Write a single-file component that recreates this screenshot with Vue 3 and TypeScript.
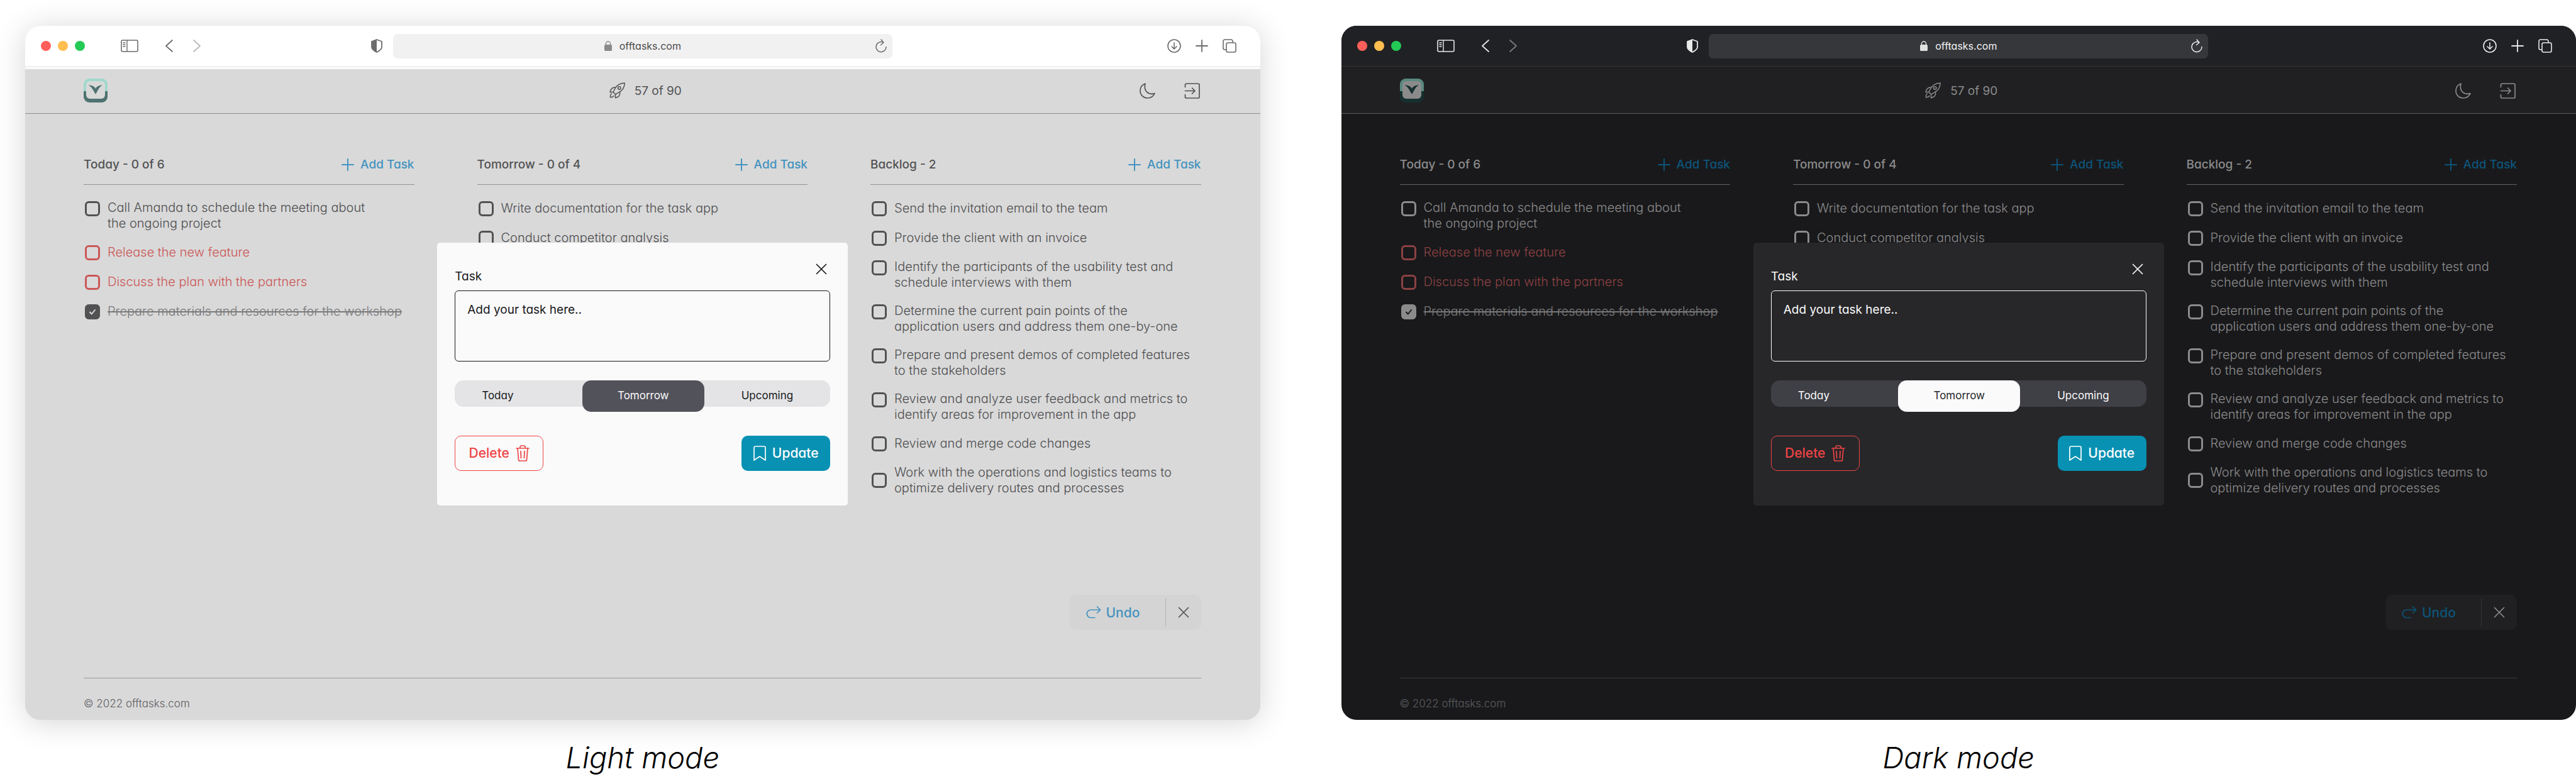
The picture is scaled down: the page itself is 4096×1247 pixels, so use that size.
<script setup lang="ts">
import { reactive } from 'vue'

interface Task {
  text: string
  urgent?: boolean
  done?: boolean
  centered?: boolean
}

interface Column {
  title: string
  tasks: Task[]
}

interface Mode {
  id: string
  caption: string
  url: string
  draft: string
  day: string
  columns: Column[]
}

const days = ['Today', 'Tomorrow', 'Upcoming']

const makeColumns = (): Column[] => [
  {
    title: 'Today - 0 of 6',
    tasks: [
      { text: 'Call Amanda to schedule the meeting about\nthe ongoing project' },
      { text: 'Release the new feature', urgent: true },
      { text: 'Discuss the plan with the partners', urgent: true },
      { text: 'Prepare materials and resources for the workshop', done: true },
    ],
  },
  {
    title: 'Tomorrow - 0 of 4',
    tasks: [
      { text: 'Write documentation for the task app' },
      { text: 'Conduct competitor analysis' },
    ],
  },
  {
    title: 'Backlog - 2',
    tasks: [
      { text: 'Send the invitation email to the team' },
      { text: 'Provide the client with an invoice' },
      { text: 'Identify the participants of the usability test and\nschedule interviews with them' },
      { text: 'Determine the current pain points of the\napplication users and address them one-by-one' },
      { text: 'Prepare and present demos of completed features\nto the stakeholders' },
      { text: 'Review and analyze user feedback and metrics to\nidentify areas for improvement in the app' },
      { text: 'Review and merge code changes' },
      { text: 'Work with the operations and logistics teams to\noptimize delivery routes and processes', centered: true },
    ],
  },
]

const makeMode = (id: string, caption: string): Mode => ({
  id,
  caption,
  url: 'offtasks.com',
  draft: '',
  day: 'Tomorrow',
  columns: makeColumns(),
})

const modes = reactive<Mode[]>([makeMode('light', 'Light mode'), makeMode('dark', 'Dark mode')])
</script>

<template>
  <main class="showcase">
    <figure v-for="mode in modes" :key="mode.id" class="mode" :class="mode.id">
      <div class="window">
        <div class="titlebar">
          <div class="bar-left">
            <div class="lights"><span class="red"></span><span class="amber"></span><span class="green"></span></div>
            <button class="icon-btn sidebar-btn" aria-label="Show sidebar">
              <svg width="28" height="20" viewBox="0 0 28 20" fill="none" stroke="currentColor" stroke-width="1.600">
                <rect x="1" y="1" width="26" height="18" rx="2" />
                <path d="M10 1v18M3.500 5h4M3.500 8h4M3.500 11h4" stroke-width="1.400" />
              </svg>
            </button>
            <button class="icon-btn back-btn" aria-label="Back">
              <svg width="12" height="20" viewBox="0 0 12 20" fill="none" stroke="currentColor" stroke-width="1.700" stroke-linecap="round" stroke-linejoin="round"><path d="M11 1 1 10l10 9" /></svg>
            </button>
            <button class="icon-btn forward" aria-label="Forward">
              <svg width="12" height="20" viewBox="0 0 12 20" fill="none" stroke="currentColor" stroke-width="1.700" stroke-linecap="round" stroke-linejoin="round"><path d="m1 1 10 9-10 9" /></svg>
            </button>
            <button class="icon-btn shield" aria-label="Privacy report">
              <svg width="18" height="22" viewBox="0 0 18 22">
                <path d="M9 1 17 4v9c0 3-3 5.500-8 8-5-2.500-8-5-8-8V4z" fill="none" stroke="currentColor" stroke-width="1.800" stroke-linejoin="round" />
                <path d="M9 1v20c-5-2.500-8-5-8-8V4z" fill="currentColor" />
              </svg>
            </button>
          </div>
          <div class="address">
            <div class="address-text">
              <svg width="12" height="16" viewBox="0 0 12 16">
                <rect x="0" y="6" width="12" height="10" rx="1.500" fill="currentColor" />
                <path d="M2.500 7V4.500a3.500 3.500 0 0 1 7 0V7" fill="none" stroke="currentColor" stroke-width="1.400" />
              </svg>
              <input v-model="mode.url" type="text" aria-label="Address" />
            </div>
            <button class="icon-btn reload" aria-label="Reload">
              <svg width="18" height="22" viewBox="0 0 18 22" fill="none" stroke="currentColor" stroke-width="1.500" stroke-linecap="round" stroke-linejoin="round">
                <path d="M17 12.500A8 8 0 1 1 13 5.700M9 1l4 4.700-4.500 3.800" />
              </svg>
            </button>
          </div>
          <div class="bar-right">
            <button class="icon-btn" aria-label="Downloads">
              <svg width="22" height="22" viewBox="0 0 22 22" fill="none" stroke="currentColor" stroke-width="1.600" stroke-linecap="round" stroke-linejoin="round"><circle cx="11" cy="11" r="10" /><path d="M11 6v10M7 12l4 4 4-4" /></svg>
            </button>
            <button class="icon-btn" aria-label="New tab">
              <svg width="20" height="20" viewBox="0 0 20 20" fill="none" stroke="currentColor" stroke-width="1.800" stroke-linecap="round"><path d="M10 1v18M1 10h18" /></svg>
            </button>
            <button class="icon-btn" aria-label="Tab overview">
              <svg width="22" height="22" viewBox="0 0 22 22" fill="none" stroke="currentColor" stroke-width="1.600"><path d="M6 17H3.500A2.500 2.500 0 0 1 1 14.500v-11A2.500 2.500 0 0 1 3.500 1h10A2.500 2.500 0 0 1 16 3.500V6" /><rect x="6" y="6" width="15" height="15" rx="2.500" /></svg>
            </button>
          </div>
        </div>

        <header class="app-header">
          <a class="logo" href="#" aria-label="Offtasks home">
            <svg width="38" height="38" viewBox="0 0 38 38">
              <path class="logo-top" d="M0 20V9a9 9 0 0 1 9-9h20a9 9 0 0 1 9 9v11z" />
              <path class="logo-bottom" d="M0 20v9a9 9 0 0 0 9 9h20a9 9 0 0 0 9-9v-9z" />
              <rect class="logo-inner" x="4" y="4" width="30" height="28" rx="6" />
              <path class="logo-mark" d="M7.500 10.500C13 10.500 17 12 19 16 21 12 25 10.500 30 10.500 25 13 23 18 19 25 15 18 12.500 13 7.500 10.500z" />
            </svg>
          </a>
          <div class="progress">
            <svg width="26" height="26" viewBox="0 0 26 26" fill="none" stroke="currentColor" stroke-width="1.500" stroke-linecap="round" stroke-linejoin="round">
              <path d="M24.200 1C16.500 1.200 11.500 4.500 8.500 10.500L6 15.500 9.500 19l4.500-2.300C20.500 13.500 24 8.500 24.200 1z" />
              <path d="M9.800 8.200C5.500 7.500 2.500 9.500 1 15.500H6" />
              <path d="M9.500 19v5.700c5.500-1 8-4.200 7-9.700" />
              <path d="M3.200 18C1.500 19.500 1.200 21.500 1.500 23.800 3.800 24 5.500 23.500 6.800 21.500" />
              <circle cx="15.700" cy="9" r="2.200" />
            </svg>
            <span>57 of 90</span>
          </div>
          <div class="header-actions">
            <button class="icon-btn" aria-label="Toggle theme">
              <svg width="25" height="25" viewBox="0 0 25 25" fill="none" stroke="currentColor" stroke-width="1.700" stroke-linejoin="round"><path d="M9 1C3.500 3 1 7.500 1 12.500 1 19 6 24 12.500 24c5.500 0 9.500-2.700 11.500-7.500C14 19.500 6 13 9 1z" /></svg>
            </button>
            <button class="icon-btn" aria-label="Log out">
              <svg width="25" height="25" viewBox="0 0 25 25" fill="none" stroke="currentColor" stroke-width="1.700" stroke-linecap="round" stroke-linejoin="round"><path d="M1.500 6.500V3a2 2 0 0 1 2-2h18.500a2 2 0 0 1 2 2v19a2 2 0 0 1-2 2H3.500a2 2 0 0 1-2-2v-3.500M1.500 12.500H17M12.500 8l4.500 4.500-4.500 4.500" /></svg>
            </button>
          </div>
        </header>

        <div class="content">
          <div class="board">
            <section v-for="column in mode.columns" :key="column.title" class="column">
              <div class="column-head">
                <h2>{{ column.title }}</h2>
                <button class="add">
                  <svg width="20" height="20" viewBox="0 0 20 20" fill="none" stroke="currentColor" stroke-width="2" stroke-linecap="round"><path d="M10 1v18M1 10h18" /></svg>
                  Add Task
                </button>
              </div>
              <ul>
                <li v-for="task in column.tasks" :key="task.text">
                  <label class="task" :class="{ urgent: task.urgent, done: task.done, centered: task.centered }">
                    <span class="check">
                      <input v-model="task.done" type="checkbox" />
                      <svg v-if="task.done" width="12" height="12" viewBox="0 0 12 12" fill="none" stroke-width="2" stroke-linecap="round" stroke-linejoin="round"><path d="m2 6.500 2.800 3L10 3" /></svg>
                    </span>
                    <span class="task-text">{{ task.text }}</span>
                  </label>
                </li>
              </ul>
            </section>
          </div>

          <div class="toast">
            <button class="undo">
              <svg width="24" height="20" viewBox="0 0 24 20" fill="none" stroke="currentColor" stroke-width="1.700" stroke-linecap="round" stroke-linejoin="round"><path d="M14 18.500H7.500a6 6 0 0 1 0-12.500H22.500M17.500 1l5 5-5 5" /></svg>
              Undo
            </button>
            <button class="dismiss" aria-label="Dismiss">
              <svg width="18" height="18" viewBox="0 0 18 18" fill="none" stroke="currentColor" stroke-width="1.700" stroke-linecap="round"><path d="m1.500 1.500 15 15M16.500 1.500l-15 15" /></svg>
            </button>
          </div>

          <footer>© 2022 offtasks.com</footer>
        </div>

        <div class="overlay">
          <form class="dialog" @submit.prevent>
            <div class="dialog-top">
              <label :for="mode.id + '-task'">Task</label>
              <button type="button" class="icon-btn close" aria-label="Close">
                <svg width="18" height="18" viewBox="0 0 18 18" fill="none" stroke="currentColor" stroke-width="1.700" stroke-linecap="round"><path d="m1.500 1.500 15 15M16.500 1.500l-15 15" /></svg>
              </button>
            </div>
            <textarea :id="mode.id + '-task'" v-model="mode.draft" placeholder="Add your task here.."></textarea>
            <div class="segments" role="radiogroup" aria-label="Day">
              <label v-for="day in days" :key="day" class="segment" :class="{ active: mode.day === day }">
                <input v-model="mode.day" type="radio" :name="mode.id + '-day'" :value="day" />
                <span>{{ day }}</span>
              </label>
            </div>
            <div class="dialog-actions">
              <button type="button" class="delete">
                Delete
                <svg width="22" height="26" viewBox="0 0 22 26" fill="none" stroke="currentColor" stroke-width="1.700" stroke-linecap="round" stroke-linejoin="round"><path d="M1 5h20M3 5l1.500 18a2 2 0 0 0 2 2h9a2 2 0 0 0 2-2L19 5M7 5V3a2 2 0 0 1 2-2h4a2 2 0 0 1 2 2v2M8 9.500l.500 11M14 9.500l-.500 11" /></svg>
              </button>
              <button type="submit" class="update">
                <svg width="20" height="24" viewBox="0 0 20 24" fill="none" stroke="currentColor" stroke-width="1.700" stroke-linecap="round" stroke-linejoin="round"><path d="M1 23V3a2 2 0 0 1 2-2h14a2 2 0 0 1 2 2v20l-9-6z" /></svg>
                Update
              </button>
            </div>
          </form>
        </div>
      </div>
      <figcaption>{{ mode.caption }}</figcaption>
    </figure>
  </main>
</template>

<style>
body {
  background: #fff;
}
</style>

<style scoped>
.showcase {
  display: flex;
  gap: 129px;
  padding: 41px 0 12px 40px;
  font-family: Inter, "Open Sans", sans-serif;
  font-feature-settings: "cv11";
  font-size: 19px;
  line-height: 25px;
}

.mode {
  flex: 1;
  min-width: 0;
  margin: 0;
}

.light {
  --bar: #fff;
  --bar-line: #e9e9e9;
  --field: #f1f1f1;
  --bar-icon: #6b6b6b;
  --bar-faint: #b9b9b9;
  --bar-lock: #8a8a8c;
  --bar-text: #4c4c4c;
  --strip: #fafafa;
  --header: #d9d9d9;
  --page: #d9d9d9;
  --header-line: #8e8e8e;
  --line: #949494;
  --foot-line: #979797;
  --foot-text: #5c5c61;
  --text: #525254;
  --body: #4e4e50;
  --muted: #79797b;
  --tick: #d9d9d9;
  --blue: #4493bf;
  --red: #cb5757;
  --toast: #d4d4d4;
  --toast-line: #b3b3b3;
  --logo-top: #9fd9cc;
  --logo-bottom: #4e7371;
  --logo-inner: #d9d9d9;
  --dialog: #fafafa;
  --dialog-text: #18181b;
  --dialog-line: #18181b;
  --track: #e4e4e6;
  --active: #52525b;
  --active-text: #fafafa;
}

.dark {
  --bar: #202124;
  --bar-line: #323235;
  --field: #36373b;
  --bar-icon: #e9e9ea;
  --bar-faint: #7d7d7f;
  --bar-lock: #e0e0e1;
  --bar-text: #f4f4f5;
  --strip: #202022;
  --header: #202022;
  --page: #19191b;
  --header-line: #5d5d5f;
  --line: #616163;
  --foot-line: #3a3a3c;
  --foot-text: #5e5e61;
  --text: #8b8b8c;
  --body: #8b8b8c;
  --muted: #78787a;
  --tick: #19191b;
  --blue: #0d5479;
  --red: #8c4143;
  --toast: #202022;
  --toast-line: #343437;
  --logo-top: #59897f;
  --logo-bottom: #16302f;
  --logo-inner: #8b8b8b;
  --dialog: #27272a;
  --dialog-text: #fafafa;
  --dialog-line: #fafafa;
  --track: #3f3f46;
  --active: #fafafa;
  --active-text: #27272a;
}

.window {
  position: relative;
  overflow: hidden;
  border-radius: 24px;
  background: var(--page);
}

.light .window {
  box-shadow: 0 4px 48px rgba(0, 0, 0, 0.17);
}

button {
  display: inline-flex;
  align-items: center;
  padding: 0;
  border: 0;
  background: none;
  color: inherit;
  font: inherit;
}

input,
textarea {
  margin: 0;
  color: inherit;
  font: inherit;
}

svg {
  display: block;
  flex: none;
}

/* Browser bar */
.titlebar {
  display: grid;
  grid-template-columns: 1fr minmax(0, 794px) 1fr;
  align-items: center;
  height: 64px;
  border-bottom: 1px solid var(--bar-line);
  background: var(--bar);
  color: var(--bar-icon);
}

.bar-left,
.bar-right {
  display: flex;
  align-items: center;
}

.bar-left {
  padding: 0 17px 0 25px;
}

.bar-right {
  justify-content: flex-end;
  gap: 23px;
  padding-right: 38px;
}

.lights {
  display: flex;
  gap: 11px;
}

.lights span {
  width: 16px;
  height: 16px;
  border-radius: 50%;
}

.red {
  background: #ff5f5a;
}

.amber {
  background: #ffbe4f;
}

.green {
  background: #23ca55;
}

.sidebar-btn {
  margin-left: 57px;
}

.back-btn {
  margin-left: 43px;
}

.forward {
  margin-left: 32px;
  color: var(--bar-faint);
}

.shield {
  margin-left: auto;
}

.address {
  display: flex;
  align-items: center;
  height: 39px;
  padding: 0 9px;
  border-radius: 7px;
  background: var(--field);
}

.address-text {
  display: flex;
  flex: 1;
  align-items: center;
  justify-content: center;
  gap: 12px;
  padding-left: 24px;
  color: var(--bar-lock);
}

.address-text input {
  width: 104px;
  padding: 0;
  border: 0;
  background: none;
  color: var(--bar-text);
  font-size: 16px;
}

/* App header */
.app-header {
  display: grid;
  grid-template-columns: 1fr auto 1fr;
  align-items: center;
  box-sizing: border-box;
  height: 75px;
  padding: 2px 96px 0 93px;
  border-bottom: 1px solid var(--header-line);
  background: linear-gradient(var(--strip) 4px, var(--header) 4px);
  color: var(--text);
}

.logo {
  justify-self: start;
}

.logo-top {
  fill: var(--logo-top);
}

.logo-bottom,
.logo-mark {
  fill: var(--logo-bottom);
}

.logo-inner {
  fill: var(--logo-inner);
}

.progress {
  display: flex;
  align-items: center;
  gap: 14px;
  padding-left: 12px;
}

.header-actions {
  display: flex;
  justify-content: flex-end;
  gap: 46px;
}

/* Board */
.content {
  padding: 49px 94px 0 93px;
  color: var(--text);
}

.board {
  display: grid;
  grid-template-columns: repeat(3, 1fr);
  gap: 100px;
}

.column-head {
  display: flex;
  align-items: center;
  justify-content: space-between;
  height: 63px;
  border-bottom: 1px solid var(--line);
}

h2 {
  margin: 0;
  font-size: 19px;
  font-weight: 500;
}

.add {
  gap: 10px;
  color: var(--blue);
  font-weight: 500;
}

ul {
  display: flex;
  flex-direction: column;
  gap: 20px;
  margin: 0;
  padding: 24px 0 0;
  list-style: none;
}

.task {
  display: flex;
  gap: 12px;
  color: var(--body);
  font-size: 20px;
  font-weight: 300;
}

.task-text {
  display: flex;
  align-items: center;
  min-height: 27px;
  white-space: pre;
}

.check {
  display: grid;
  flex: none;
  place-items: center;
  width: 24px;
  height: 24px;
  margin: 2px 0 0 2px;
  color: var(--text);
}

.check > * {
  grid-area: 1 / 1;
}

.check input {
  box-sizing: border-box;
  width: 24px;
  height: 24px;
  border: 3px solid currentColor;
  border-radius: 6px;
  appearance: none;
}

.check input:checked {
  background: currentColor;
}

.check svg {
  z-index: 1;
  stroke: var(--tick);
}

.urgent,
.urgent .check {
  color: var(--red);
}

.done {
  color: var(--muted);
  text-decoration: line-through;
}

.centered {
  align-items: center;
}

.centered .check {
  margin-top: 0;
}

/* Undo toast */
.toast {
  display: flex;
  align-items: center;
  justify-content: space-between;
  box-sizing: border-box;
  width: 209px;
  height: 56px;
  margin: 157px 0 0 auto;
  padding-left: 26px;
  border-radius: 10px;
  background: var(--toast);
}

.undo {
  gap: 8px;
  color: var(--blue);
  font-size: 21px;
  font-weight: 500;
}

.dismiss {
  height: 45px;
  padding: 0 19px;
  border-left: 1px solid var(--toast-line);
}

footer {
  margin-top: 76px;
  padding: 28px 0 13px;
  border-top: 1px solid var(--foot-line);
  color: var(--foot-text);
  font-size: 17px;
  font-weight: 300;
}

/* Task dialog */
.overlay {
  position: absolute;
  inset: 0;
  display: grid;
  place-items: center;
  padding-top: 3px;
}

.dialog {
  box-sizing: border-box;
  width: 653px;
  padding: 33px 28px 55px;
  border-radius: 5px;
  background: var(--dialog);
  color: var(--dialog-text);
}

.dialog-top {
  display: flex;
  align-items: flex-start;
  justify-content: space-between;
}

.dialog-top label {
  padding: 8px 0 10px;
}

.close {
  margin-right: 5px;
}

textarea {
  display: block;
  box-sizing: border-box;
  width: 100%;
  height: 113px;
  padding: 17px 19px;
  border: 1px solid var(--dialog-line);
  border-radius: 6px;
  background: none;
  resize: none;
}

textarea::placeholder {
  color: inherit;
  opacity: 1;
}

.segments {
  display: grid;
  grid-template-columns: 203fr 194fr 201fr;
  align-items: center;
  height: 42px;
  margin-top: 30px;
  border-radius: 14px;
  background: var(--track);
  font-size: 17px;
}

.segment {
  display: flex;
  align-items: center;
  justify-content: center;
  height: 50px;
  border-radius: 14px;
}

.segment:first-child {
  justify-content: flex-start;
  padding-left: 43px;
}

.segment input {
  position: absolute;
  opacity: 0;
}

.segment.active {
  background: var(--active);
  color: var(--active-text);
}

.dialog-actions {
  display: flex;
  justify-content: space-between;
  margin-top: 46px;
}

.dialog-actions button {
  box-sizing: border-box;
  justify-content: center;
  gap: 10px;
  width: 141px;
  height: 56px;
  border-radius: 10px;
  font-size: 21px;
  font-weight: 500;
}

.dialog-actions .delete {
  border: 1px solid #ef4444;
  color: #ef4444;
}

.dialog-actions .update {
  background: #0891b2;
  color: #fff;
}

figcaption {
  margin-top: 30px;
  font-size: 47px;
  font-style: italic;
  font-weight: 300;
  line-height: 60px;
  text-align: center;
}
</style>
